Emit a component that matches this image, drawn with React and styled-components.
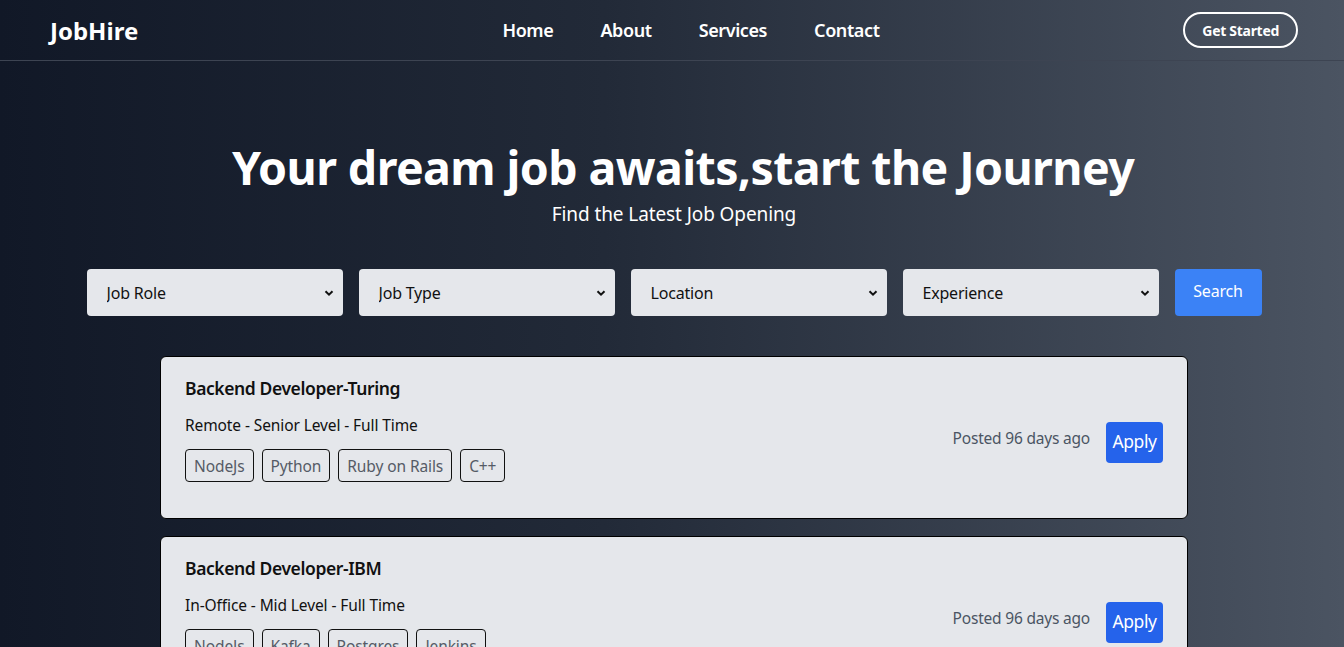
import React from 'react';
import styled, { createGlobalStyle } from 'styled-components';

const GlobalStyle = createGlobalStyle`
  * { box-sizing: border-box; }
  body {
    margin: 0;
    font-family: "Noto Sans", "Open Sans", sans-serif;
  }
`;

const Page = styled.div`
  min-height: 100vh;
  background: linear-gradient(to right, #111827 0%, #222a38 45%, #4b5462 100%);
  color: #fff;
  padding-bottom: 40px;
`;

const Navbar = styled.nav`
  height: 61px;
  display: flex;
  align-items: center;
  justify-content: space-between;
  padding: 0 46px 0 50px;
  border-bottom: 1px solid #3d4452;
`;

const Logo = styled.div`
  font-size: 24px;
  font-weight: 700;
  letter-spacing: 0;
  width: 200px;
`;

const NavLinks = styled.ul`
  display: flex;
  gap: 47px;
  list-style: none;
  margin: 0;
  padding: 0;
  margin-left: 34px;
`;

const NavLink = styled.li`
  font-size: 18px;
  font-weight: 600;
  letter-spacing: -0.4px;
`;

const NavRight = styled.div`
  width: 200px;
  display: flex;
  justify-content: flex-end;
`;

const StartButton = styled.button`
  height: 36px;
  padding: 0 17px;
  background: transparent;
  border: 2px solid #fff;
  border-radius: 999px;
  color: #fff;
  font-family: inherit;
  font-size: 14px;
  font-weight: 700;
  letter-spacing: -0.3px;
`;

const Main = styled.main`
  padding-left: 4px;
`;

const Hero = styled.section`
  display: flex;
  flex-direction: column;
  align-items: center;
  padding-top: 74px;
`;

const Title = styled.h1`
  margin: 0;
  padding-left: 18px;
  font-size: 46.5px;
  font-weight: 700;
  line-height: 64px;
  letter-spacing: -0.6px;
`;

const Subtitle = styled.p`
  margin: 2px 0 0;
  font-size: 19px;
  line-height: 26px;
  letter-spacing: -0.1px;
`;

const Filters = styled.div`
  display: flex;
  justify-content: center;
  gap: 16px;
  margin-top: 42px;
`;

const SelectBox = styled.div`
  width: 256px;
  height: 47px;
  display: flex;
  align-items: center;
  background: #e5e7eb;
  border-radius: 4px;
  padding: 0 9px 0 0;
`;

const Select = styled.select`
  flex: 1;
  appearance: none;
  border: none;
  background: transparent;
  height: 100%;
  padding: 1px 0 0 20px;
  font-family: inherit;
  font-size: 16px;
  color: #111;
  letter-spacing: -0.2px;
  outline: none;
`;

const SearchButton = styled.button`
  width: 87px;
  height: 47px;
  background: #3b82f6;
  color: #fff;
  border: none;
  border-radius: 4px;
  font-family: inherit;
  font-size: 16px;
  letter-spacing: -0.2px;
  padding-bottom: 5px;
`;

const JobList = styled.div`
  display: flex;
  flex-direction: column;
  align-items: center;
  gap: 17px;
  margin-top: 40px;
`;

const Card = styled.article`
  width: 1028px;
  height: 163px;
  display: flex;
  justify-content: space-between;
  align-items: center;
  padding: 0 24px;
  background: #e5e7eb;
  border: 1px solid #000;
  border-radius: 6px;
  color: #111;
`;

const CardInfo = styled.div`
  display: flex;
  flex-direction: column;
  align-self: flex-start;
  padding-top: 18px;
`;

const JobTitle = styled.h2`
  margin: 0;
  font-size: 17.5px;
  font-weight: 600;
  line-height: 26px;
  letter-spacing: -0.4px;
`;

const Meta = styled.p`
  margin: 13px 0 0;
  font-size: 15.5px;
  line-height: 22px;
  letter-spacing: -0.1px;
`;

const Tags = styled.div`
  display: flex;
  gap: 8px;
  margin-top: 13px;
`;

const Tag = styled.span`
  height: 33px;
  display: flex;
  align-items: center;
  padding: 0 8px;
  border: 1px solid #111;
  border-radius: 4px;
  font-size: 15.5px;
  color: #555b66;
  letter-spacing: -0.1px;
`;

const CardAside = styled.div`
  display: flex;
  align-items: center;
  gap: 16px;
  margin-top: 9px;
`;

const Posted = styled.span`
  font-size: 15.5px;
  color: #4b5563;
  letter-spacing: -0.2px;
  margin-top: -8px;
`;

const ApplyButton = styled.button`
  width: 57px;
  height: 41px;
  background: #2563eb;
  color: #fff;
  border: none;
  border-radius: 4px;
  font-family: inherit;
  font-size: 17.5px;
  letter-spacing: -0.4px;
  padding: 0 0 2px;
`;

const Chevron = () => (
  <svg width="10" height="8" viewBox="0 0 10 8" fill="none">
    <path d="M1.5 2.2l3.5 3.5 3.5-3.5" stroke="#111" strokeWidth="2" />
  </svg>
);

const filters = ['Job Role', 'Job Type', 'Location', 'Experience'];

const jobs = [
  {
    title: 'Backend Developer-Turing',
    meta: 'Remote - Senior Level - Full Time',
    tags: ['NodeJs', 'Python', 'Ruby on Rails', 'C++'],
  },
  {
    title: 'Backend Developer-IBM',
    meta: 'In-Office - Mid Level - Full Time',
    tags: ['NodeJs', 'Kafka', 'Postgres', 'Jenkins'],
  },
  {
    title: 'Frontend Developer-Google',
    meta: 'Remote - Junior Level - Full Time',
    tags: ['React', 'TypeScript', 'Tailwind'],
  },
];

function App() {
  return (
    <Page>
      <GlobalStyle />
      <Navbar>
        <Logo>JobHire</Logo>
        <NavLinks>
          <NavLink>Home</NavLink>
          <NavLink>About</NavLink>
          <NavLink>Services</NavLink>
          <NavLink>Contact</NavLink>
        </NavLinks>
        <NavRight>
          <StartButton>Get Started</StartButton>
        </NavRight>
      </Navbar>

      <Main>
        <Hero>
          <Title>Your dream job awaits,start the Journey</Title>
          <Subtitle>Find the Latest Job Opening</Subtitle>
        </Hero>

        <Filters>
          {filters.map((f) => (
            <SelectBox key={f}>
              <Select defaultValue={f}>
                <option>{f}</option>
              </Select>
              <Chevron />
            </SelectBox>
          ))}
          <SearchButton>Search</SearchButton>
        </Filters>

        <JobList>
          {jobs.map((job) => (
            <Card key={job.title}>
              <CardInfo>
                <JobTitle>{job.title}</JobTitle>
                <Meta>{job.meta}</Meta>
                <Tags>
                  {job.tags.map((t) => (
                    <Tag key={t}>{t}</Tag>
                  ))}
                </Tags>
              </CardInfo>
              <CardAside>
                <Posted>Posted 96 days ago</Posted>
                <ApplyButton>Apply</ApplyButton>
              </CardAside>
            </Card>
          ))}
        </JobList>
      </Main>
    </Page>
  );
}

export default App;
